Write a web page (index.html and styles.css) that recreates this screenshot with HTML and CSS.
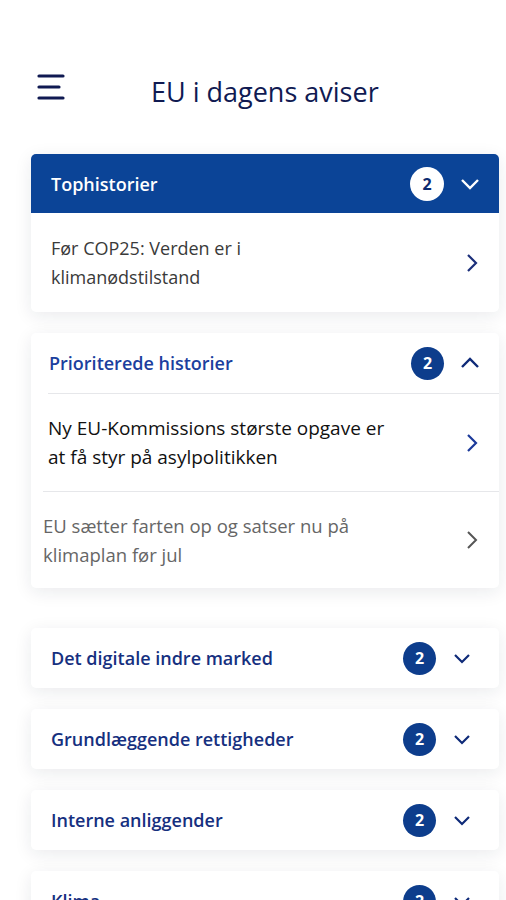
FILE: index.html
```html
<!DOCTYPE html>
<html lang="da">
<head>
    <meta charset="UTF-8">
    <meta name="viewport" content="width=device-width, initial-scale=1.0">
    <title>EU i dagens aviser</title>
    <link rel="stylesheet" href="styles.css">
</head>
<body>
    <header class="topbar">
        <svg class="menu-icon" width="28" height="26" viewBox="0 0 28 26">
            <path d="M2 2h24M2 13h20M2 24h24" stroke="#101a52" stroke-width="3.2" stroke-linecap="round" fill="none"/>
        </svg>
        <h1 class="page-title">EU i dagens aviser</h1>
    </header>

    <main class="sections">
        <section class="card">
            <div class="card-head card-head--active">
                <span class="card-title">Tophistorier</span>
                <span class="badge badge--light">2</span>
                <svg class="chev" width="20" height="12" viewBox="0 0 20 12"><polyline points="2,2 10,10 18,2" fill="none" stroke="#fff" stroke-width="2.4"/></svg>
            </div>
            <a class="story story--top">
                <span class="story-text">Før COP25: Verden er i klimanødstilstand</span>
                <svg class="arrow" width="12" height="20" viewBox="0 0 12 20"><polyline points="2,2 10,10 2,18" fill="none" stroke="#1b2f7a" stroke-width="2.2"/></svg>
            </a>
        </section>

        <section class="card card--open">
            <div class="card-head">
                <span class="card-title card-title--blue">Prioriterede historier</span>
                <span class="badge">2</span>
                <svg class="chev" width="20" height="12" viewBox="0 0 20 12"><polyline points="2,10 10,2 18,10" fill="none" stroke="#0e2a78" stroke-width="2.4"/></svg>
            </div>
            <a class="story story--main">
                <span class="story-text">Ny EU-Kommissions største opgave er at få styr på asylpolitikken</span>
                <svg class="arrow" width="12" height="20" viewBox="0 0 12 20"><polyline points="2,2 10,10 2,18" fill="none" stroke="#1b3a9a" stroke-width="2.2"/></svg>
            </a>
            <a class="story story--muted">
                <span class="story-text">EU sætter farten op og satser nu på klimaplan før jul</span>
                <svg class="arrow" width="12" height="20" viewBox="0 0 12 20"><polyline points="2,2 10,10 2,18" fill="none" stroke="#555" stroke-width="2"/></svg>
            </a>
        </section>

        <section class="card card--closed">
            <div class="card-head">
                <span class="card-title">Det digitale indre marked</span>
                <span class="badge">2</span>
                <svg class="chev" width="18" height="11" viewBox="0 0 18 11"><polyline points="2,2 9,9 16,2" fill="none" stroke="#0e2a78" stroke-width="2.2"/></svg>
            </div>
        </section>

        <section class="card card--closed">
            <div class="card-head">
                <span class="card-title">Grundlæggende rettigheder</span>
                <span class="badge">2</span>
                <svg class="chev" width="18" height="11" viewBox="0 0 18 11"><polyline points="2,2 9,9 16,2" fill="none" stroke="#0e2a78" stroke-width="2.2"/></svg>
            </div>
        </section>

        <section class="card card--closed">
            <div class="card-head">
                <span class="card-title">Interne anliggender</span>
                <span class="badge">2</span>
                <svg class="chev" width="18" height="11" viewBox="0 0 18 11"><polyline points="2,2 9,9 16,2" fill="none" stroke="#0e2a78" stroke-width="2.2"/></svg>
            </div>
        </section>

        <section class="card card--closed">
            <div class="card-head">
                <span class="card-title">Klima</span>
                <span class="badge">2</span>
                <svg class="chev" width="18" height="11" viewBox="0 0 18 11"><polyline points="2,2 9,9 16,2" fill="none" stroke="#0e2a78" stroke-width="2.2"/></svg>
            </div>
        </section>
    </main>
</body>
</html>
```

FILE: styles.css
```css
body {
    margin: 0;
    background: #fff;
    font-family: "Open Sans", "Noto Sans", sans-serif;
    overflow: hidden;
}
.topbar {
    display: flex;
    align-items: center;
    padding: 73px 0 0 37px;
    height: 28px;
}
.menu-icon {
    display: block;
}
.page-title {
    margin: 8px 0 0 86px;
    font-size: 27px;
    font-weight: 400;
    color: #101a52;
}
.sections {
    display: flex;
    flex-direction: column;
    gap: 21px;
    margin: 53px 7px 0 31px;
}
.card {
    background: #fff;
    border-radius: 5px;
    box-shadow: 0 4px 18px rgba(20, 30, 60, 0.09);
    overflow: hidden;
}
.card--open {
    margin-bottom: 19px;
}
.card-head {
    display: flex;
    align-items: center;
    height: 60px;
    padding: 0 19px 0 18px;
}
.card-head--active {
    background: #0b4497;
    height: 59px;
    padding-left: 20px;
}
.card-title {
    flex: 1;
    font-size: 18px;
    font-weight: 600;
    color: #fff;
}
.card-title--blue {
    color: #1c3f9e;
}
.card--closed .card-head {
    padding: 0 28px 0 20px;
}
.card--closed .card-title {
    color: #16307f;
}
.badge {
    width: 33px;
    height: 33px;
    border-radius: 50%;
    background: #0d3d8c;
    color: #fff;
    font-size: 16px;
    font-weight: 700;
    display: flex;
    align-items: center;
    justify-content: center;
    margin-right: 16px;
}
.badge--light {
    background: #fff;
    color: #0b2a6f;
    width: 34px;
    height: 34px;
}
.card--closed .badge {
    margin-right: 17px;
}
.chev {
    display: block;
}
.story {
    display: flex;
    align-items: center;
    padding: 0 21px 0 20px;
    font-size: 18px;
    line-height: 29px;
}
.story-text {
    flex: 1;
    padding-right: 40px;
}
.story--top {
    height: 99px;
    color: #3a3a3a;
}
.story--top .story-text {
    padding-right: 150px;
}
.story--main {
    height: 97px;
    margin-left: 17px;
    padding-left: 0;
    border-top: 1px solid #e6e7ea;
    color: #111;
    font-size: 19px;
    font-weight: 500;
}
.story--main .story-text {
    padding-right: 72px;
}
.story--muted {
    height: 96px;
    margin-left: 12px;
    padding-left: 0;
    border-top: 1px solid #e6e7ea;
    color: #666;
    font-size: 18.5px;
}
.story--muted .story-text {
    padding-right: 90px;
}
.arrow {
    display: block;
}
```
